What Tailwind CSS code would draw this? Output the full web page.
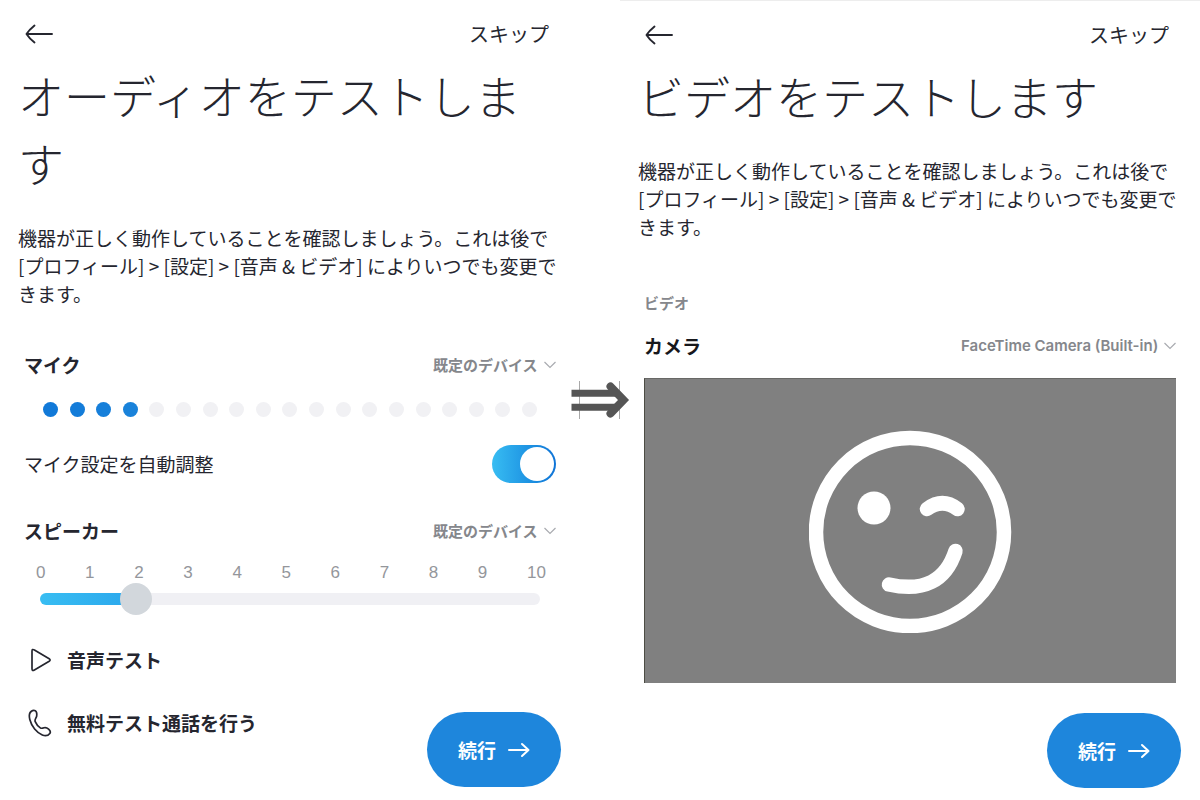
<!DOCTYPE html>
<html lang="ja">
<head>
  <meta charset="UTF-8">
  <meta name="viewport" content="width=device-width, initial-scale=1.0">
  <title>オーディオとビデオのテスト</title>
  <script src="https://cdn.jsdelivr.net/npm/@tailwindcss/browser@4"></script>
</head>
<body class="bg-white text-[#25262f] font-['Noto_Sans_CJK_JP',sans-serif]">
  <main class="relative flex items-start">

    <!-- Audio -->
    <section class="flex-1 min-w-0">
      <header class="flex h-[60px] items-center justify-between pt-2 pl-6 pr-[31px]">
        <button type="button" aria-label="戻る">
          <svg class="h-6 w-[30px]" viewBox="0 0 30 24" fill="none" stroke="currentColor" stroke-width="1.9" stroke-linecap="round" stroke-linejoin="round">
            <path d="M28 12H3M10.500 3.500Q5 8 2.500 12Q5 16 10.500 20.500"/>
          </svg>
        </button>
        <a href="#" class="text-[20px] leading-7">スキップ</a>
      </header>
      <h1 class="px-[18px] text-[46px] leading-[68px] font-light">オーディオをテストします</h1>
      <p class="mt-7 px-[18px] text-[19px] leading-7">機器が正しく動作していることを確認しましょう。これは後で [プロフィール] &gt; [設定] &gt; [音声 &amp; ビデオ] によりいつでも変更できます。</p>

      <div class="px-6">
        <div class="mt-[43px] flex h-7 items-center justify-between">
          <label for="mic" class="text-[19px] leading-7 font-bold">マイク</label>
          <div class="flex items-center gap-[5px] text-[#85878c]">
            <select id="mic" class="appearance-none text-[15px] leading-6 font-bold">
              <option>既定のデバイス</option>
            </select>
            <svg class="pointer-events-none h-2 w-3" viewBox="0 0 12 8" fill="none" stroke="#a9abb0" stroke-width="1.2"><path d="M.5 1L6 6.5L11.5 1"/></svg>
          </div>
        </div>
        <div class="mt-[23px] flex justify-between px-[19px]">
          <span class="size-[15px] rounded-full bg-[#1179d8]"></span>
          <span class="size-[15px] rounded-full bg-[#137cd9]"></span>
          <span class="size-[15px] rounded-full bg-[#167fda]"></span>
          <span class="size-[15px] rounded-full bg-[#1982da]"></span>
          <span class="size-[15px] rounded-full bg-[#f1f1f4]"></span>
          <span class="size-[15px] rounded-full bg-[#f1f1f4]"></span>
          <span class="size-[15px] rounded-full bg-[#f1f1f4]"></span>
          <span class="size-[15px] rounded-full bg-[#f1f1f4]"></span>
          <span class="size-[15px] rounded-full bg-[#f1f1f4]"></span>
          <span class="size-[15px] rounded-full bg-[#f1f1f4]"></span>
          <span class="size-[15px] rounded-full bg-[#f1f1f4]"></span>
          <span class="size-[15px] rounded-full bg-[#f1f1f4]"></span>
          <span class="size-[15px] rounded-full bg-[#f1f1f4]"></span>
          <span class="size-[15px] rounded-full bg-[#f1f1f4]"></span>
          <span class="size-[15px] rounded-full bg-[#f1f1f4]"></span>
          <span class="size-[15px] rounded-full bg-[#f1f1f4]"></span>
          <span class="size-[15px] rounded-full bg-[#f1f1f4]"></span>
          <span class="size-[15px] rounded-full bg-[#f1f1f4]"></span>
          <span class="size-[15px] rounded-full bg-[#f1f1f4]"></span>
        </div>
        <div class="mt-7 flex items-center justify-between">
          <label for="auto" class="text-[19px] leading-7">マイク設定を自動調整</label>
          <input id="auto" type="checkbox" checked class="flex h-[38px] w-16 appearance-none items-center justify-end rounded-full bg-linear-to-r from-[#38bdf2] to-[#0f73d6] pr-[2px] before:size-[34px] before:rounded-full before:bg-white before:content-['']">
        </div>

        <div class="mt-[34px] flex h-7 items-center justify-between">
          <label for="speaker" class="text-[19px] leading-7 font-bold">スピーカー</label>
          <div class="flex items-center gap-[5px] text-[#85878c]">
            <select id="speaker" class="appearance-none text-[15px] leading-6 font-bold">
              <option>既定のデバイス</option>
            </select>
            <svg class="pointer-events-none h-2 w-3" viewBox="0 0 12 8" fill="none" stroke="#a9abb0" stroke-width="1.2"><path d="M.5 1L6 6.5L11.5 1"/></svg>
          </div>
        </div>
        <div class="mt-[18px] flex justify-between pl-3 pr-5 font-['Liberation_Sans',sans-serif] text-[17px] leading-5 text-[#94969b]">
          <span class="w-[9px]">0</span>
          <span class="w-[9px]">1</span>
          <span class="w-[9px]">2</span>
          <span class="w-[9px]">3</span>
          <span class="w-[9px]">4</span>
          <span class="w-[9px]">5</span>
          <span class="w-[9px]">6</span>
          <span class="w-[9px]">7</span>
          <span class="w-[9px]">8</span>
          <span class="w-[9px]">9</span>
          <span class="w-[9px]">10</span>
        </div>
        <div class="flex px-4">
          <input type="range" min="0" max="10" step="0.1" value="1.7" aria-label="スピーカーの音量" class="h-8 w-full appearance-none [&::-webkit-slider-runnable-track]:h-3 [&::-webkit-slider-runnable-track]:rounded-full [&::-webkit-slider-runnable-track]:bg-[linear-gradient(90deg,#38bdf2,#2aa6ec_20%,#f0f0f4_20%)] [&::-webkit-slider-thumb]:-mt-[10px] [&::-webkit-slider-thumb]:size-8 [&::-webkit-slider-thumb]:appearance-none [&::-webkit-slider-thumb]:rounded-full [&::-webkit-slider-thumb]:bg-[#d2d7dc]">
        </div>
      </div>

      <div class="mt-[31px] flex items-start justify-between pl-7 pr-[19px]">
        <div class="flex flex-col items-start gap-[35px]">
          <button type="button" class="flex h-7 items-center gap-[15px] text-[19px] leading-7 font-bold">
            <svg class="size-6" viewBox="0 0 24 24" fill="none" stroke="currentColor" stroke-width="1.700" stroke-linejoin="round">
              <path d="M4 3.200V20.800Q4 23.400 6.400 22L21.200 13.200Q23 12 21.200 10.800L6.400 2Q4 .6 4 3.200Z"/>
            </svg>
            音声テスト
          </button>
          <button type="button" class="flex h-7 items-center gap-[15px] text-[19px] leading-7 font-bold">
            <svg class="h-7 w-6" viewBox="0 0 24 28" fill="none" stroke="currentColor" stroke-width="1.700" stroke-linejoin="round">
              <path d="M4.500 1.600C6.800 1 8.200 1.800 8.600 3.700C9 5.800 8.900 7.300 8 8.800C7.200 10.200 6.600 11.200 7.200 12.600C8.300 15.200 10 17.300 12.300 18.900C13.500 19.700 14.600 19.300 16 18.800C17.800 18.200 19.100 18.800 20.600 20.100C22.500 21.700 22.900 22.900 21.800 24.400C20.200 26.600 17.400 27.300 14.300 26C8.800 23.600 3.500 17.400 1.800 10.500C.9 6.700 1.600 2.700 4.500 1.600Z"/>
            </svg>
            無料テスト通話を行う
          </button>
        </div>
        <button type="button" class="mt-[66px] flex h-[75px] w-[134px] items-center justify-center gap-3 rounded-full bg-[#1e86dc] text-[19px] leading-7 font-bold text-white">
          続行
          <svg class="h-4 w-[22px]" viewBox="0 0 22 16" fill="none" stroke="currentColor" stroke-width="2" stroke-linecap="round" stroke-linejoin="round"><path d="M1 8H20M14 2L20.500 8L14 14"/></svg>
        </button>
      </div>
    </section>

    <div class="w-10 shrink-0"></div>
    <svg class="absolute top-[380px] left-1/2 h-10 w-[60px] -translate-x-1/2" viewBox="0 0 60 40" fill="none">
      <path d="M9.500 1V39M49.500 1V39" stroke="#a8a8a8" stroke-width="1"/>
      <path d="M10 16H46L50 20L46 24H10Z" fill="#fff"/>
      <path d="M1.500 13.200H47M1.500 27.200H47" stroke="#555" stroke-width="7"/>
      <path d="M40.500 6.500L53.500 20L40.500 33.500" stroke="#555" stroke-width="8" stroke-linecap="round"/>
    </svg>

    <!-- Video -->
    <section class="flex-1 min-w-0 border-t border-[#ededed]">
      <header class="flex h-[60px] items-center justify-between pt-2 pl-6 pr-[31px]">
        <button type="button" aria-label="戻る">
          <svg class="h-6 w-[30px]" viewBox="0 0 30 24" fill="none" stroke="currentColor" stroke-width="1.9" stroke-linecap="round" stroke-linejoin="round">
            <path d="M28 12H3M10.500 3.500Q5 8 2.500 12Q5 16 10.500 20.500"/>
          </svg>
        </button>
        <a href="#" class="text-[20px] leading-7">スキップ</a>
      </header>
      <h1 class="px-[18px] text-[46px] leading-[68px] font-light">ビデオをテストします</h1>
      <p class="mt-7 px-[18px] text-[19px] leading-7">機器が正しく動作していることを確認しましょう。これは後で [プロフィール] &gt; [設定] &gt; [音声 &amp; ビデオ] によりいつでも変更できます。</p>

      <div class="px-6">
        <h2 class="mt-[50px] text-[15px] leading-6 font-bold text-[#85878c]">ビデオ</h2>
        <div class="mt-[17px] flex h-7 items-center justify-between">
          <label for="camera" class="text-[19px] leading-7 font-bold text-[#17181c]">カメラ</label>
          <div class="flex items-center gap-[5px] text-[#85878c]">
            <select id="camera" class="appearance-none font-['Inter',sans-serif] text-[15px] leading-6 font-semibold">
              <option>FaceTime Camera (Built-in)</option>
            </select>
            <svg class="pointer-events-none h-2 w-3" viewBox="0 0 12 8" fill="none" stroke="#a9abb0" stroke-width="1.2"><path d="M.5 1L6 6.5L11.5 1"/></svg>
          </div>
        </div>
        <div class="mt-[18px] flex h-[305px] items-center justify-center border-t border-l border-t-[#686866] border-l-[#4c4c44] bg-[#808080]">
          <svg class="size-[204px]" viewBox="0 0 204 204" fill="none" stroke="#fff" stroke-width="14.500" stroke-linecap="round">
            <circle cx="101" cy="103" r="94"/>
            <circle cx="65" cy="79" r="16.500" fill="#fff" stroke="none"/>
            <path d="M118 80Q133.500 68.500 148.500 80"/>
            <path d="M80 155.500Q132 167 146.500 122"/>
          </svg>
        </div>
      </div>

      <div class="mt-[30px] flex justify-end pr-[19px]">
        <button type="button" class="flex h-[75px] w-[134px] items-center justify-center gap-3 rounded-full bg-[#1e86dc] text-[19px] leading-7 font-bold text-white">
          続行
          <svg class="h-4 w-[22px]" viewBox="0 0 22 16" fill="none" stroke="currentColor" stroke-width="2" stroke-linecap="round" stroke-linejoin="round"><path d="M1 8H20M14 2L20.500 8L14 14"/></svg>
        </button>
      </div>
    </section>
  </main>
</body>
</html>
